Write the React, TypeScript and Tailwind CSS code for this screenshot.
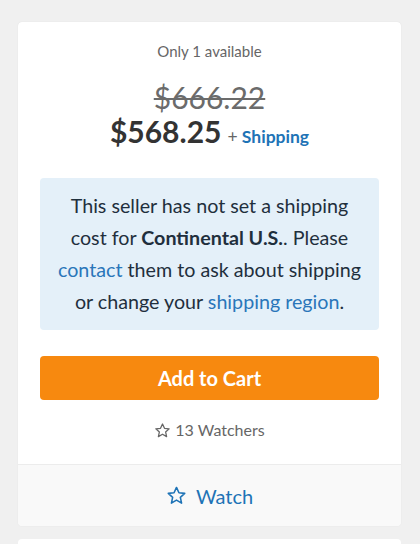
import React from 'react';

const StarIcon = ({ className }: { className?: string }) => (
  <svg viewBox="0 0 24 24" className={className} fill="none" stroke="currentColor" strokeWidth={1.8} strokeLinejoin="round">
    <path d="M12 2.8l2.8 6.1 6.6.7-5 4.5 1.4 6.6L12 17.3l-5.8 3.4 1.4-6.6-5-4.5 6.6-.7z" />
  </svg>
);

const App = () => {
  return (
    <div className="min-h-[544px] bg-[#f0f0f0] pt-[22px] font-['Lato','Open_Sans',sans-serif]">
      <div className="ml-[18px] w-[383px] rounded-[4px] bg-white shadow-[0_0_1px_rgba(0,0,0,0.12)]">
        {/* price + shipping */}
        <div className="flex flex-col items-center px-[22px] pt-[19px] pb-[24px]">
          <div className="text-[15px] leading-[20px] text-[#666]">Only 1 available</div>
          <div className="mt-[21px] text-[30px] leading-[30px] text-[#6b6b6b] line-through decoration-[2px]">$666.22</div>
          <div className="mt-[1px] flex items-baseline gap-[6px]">
            <span className="text-[30px] leading-[36px] font-bold text-[#333]">$568.25</span>
            <span className="text-[17.5px] font-bold text-[#1e73b6]">
              <span className="font-normal text-[#666]">+</span> Shipping
            </span>
          </div>

          <div className="mt-[28px] w-full rounded-[4px] bg-[#e4f0f9] px-[14px] py-[12px] text-center text-[19.7px] leading-[32px] text-[#1f2f3d]">
            This seller has not set a shipping cost for <b>Continental U.S.</b>. Please{' '}
            <a className="text-[#2a76b9]">contact</a> them to ask about shipping or change your{' '}
            <a className="text-[#2a76b9]">shipping region</a>.
          </div>

          <button className="mt-[26px] h-[44px] w-full rounded-[4px] bg-[#f7890f] text-[20px] font-bold text-white">
            Add to Cart
          </button>

          <div className="mt-[20px] flex items-center gap-[4px] text-[16px] leading-[20px] text-[#666]">
            <StarIcon className="h-[17px] w-[17px]" />
            13 Watchers
          </div>
        </div>

        {/* watch footer */}
        <div className="flex h-[62px] items-center justify-center gap-[9px] rounded-b-[4px] border-t border-[#ececec] bg-[#f9f9f9] text-[20px] text-[#1e73b6]">
          <StarIcon className="h-[21px] w-[21px]" />
          Watch
        </div>
      </div>

      <div className="mt-[13px] ml-[18px] h-[20px] w-[383px] rounded-t-[4px] bg-white" />
    </div>
  );
};

export default App;
